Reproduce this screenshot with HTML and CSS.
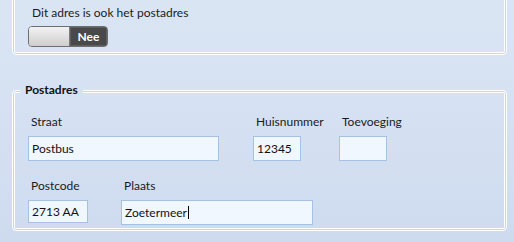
FILE: index.html
```
<!DOCTYPE html>
<html lang="nl">
<head>
<meta charset="utf-8">
<title>Adres</title>
<link rel="stylesheet" href="styles.css">
</head>
<body>
<div class="group group-top">
  <div class="check-label">Dit adres is ook het postadres</div>
  <div class="toggle">
    <span class="toggle-thumb"></span>
    <span class="toggle-text">Nee</span>
  </div>
</div>
<fieldset class="group group-post">
  <legend class="legend">Postadres</legend>
  <div class="fields">
    <div class="row row-one">
      <div class="field f-straat">
        <div class="label">Straat</div>
        <div class="input">Postbus</div>
      </div>
      <div class="field f-huis">
        <div class="label">Huisnummer</div>
        <div class="input">12345</div>
      </div>
      <div class="field f-toev">
        <div class="label">Toevoeging</div>
        <div class="input"></div>
      </div>
    </div>
    <div class="row row-two">
      <div class="field f-postcode">
        <div class="label">Postcode</div>
        <div class="input input-short">2713 AA</div>
      </div>
      <div class="field f-plaats">
        <div class="label">Plaats</div>
        <div class="input">Zoetermeer<span class="caret"></span></div>
      </div>
    </div>
  </div>
</fieldset>
</body>
</html>
```
FILE: styles.css
```
html, body {
  margin: 0;
  padding: 0;
}
body {
  width: 514px;
  height: 242px;
  overflow: hidden;
  background: linear-gradient(to bottom, #dae5f4 0%, #d5e1f2 50%, #cedbef 100%);
  font-family: Lato, "Liberation Sans", sans-serif;
  font-size: 12px;
  color: #1b1b1b;
}
.group {
  border: 1px solid #ffffff;
  border-radius: 4px;
  box-shadow: inset 0 0 0 1px #c9d6e6, inset 0 0 0 2px #ffffff;
  margin-left: 12px;
  margin-right: 7px;
  box-sizing: border-box;
}
.group-top {
  margin-top: -20px;
  padding: 24px 0 7px 15px;
}
.check-label {
  line-height: 16px;
  padding-left: 4px;
}
.toggle {
  margin-top: 5px;
  width: 80px;
  height: 21px;
  box-sizing: border-box;
  border: 1px solid #6e6e6e;
  border-radius: 4px;
  overflow: hidden;
  display: flex;
}
.toggle-thumb {
  width: 40px;
  background: linear-gradient(to bottom, #f2f2f2 0%, #e2e2e2 45%, #cdcdcd 100%);
  border-right: 1px solid #7a7a7a;
}
.toggle-text {
  flex: 1;
  background: #494949;
  color: #ffffff;
  font-weight: bold;
  text-align: center;
  line-height: 19px;
  box-shadow: inset 0 0 0 1px #5e5e5e;
}
.group-post {
  margin-top: 27px;
  padding: 0 0 5px 0;
  min-width: 0;
}
.legend {
  margin-left: 7px;
  padding: 0 5px;
  font-weight: bold;
  line-height: 16px;
  color: #111;
  background: #d6e2f3;
}
.fields {
  padding-left: 15px;
}
.row {
  display: flex;
}
.row-one {
  margin-top: 16px;
}
.row-two {
  margin-top: 17px;
}
.label {
  line-height: 16px;
  padding-left: 3px;
  white-space: nowrap;
}
.input {
  margin-top: 6px;
  height: 25px;
  box-sizing: border-box;
  border: 1px solid #a6c2e2;
  background: #f1f7fe;
  padding-left: 3px;
  line-height: 23px;
  color: #111;
  white-space: nowrap;
}
.input-short {
  height: 23px;
  line-height: 21px;
}
.f-straat { width: 191px; margin-right: 34px; }
.f-huis { width: 48px; margin-right: 38px; }
.f-toev { width: 48px; }
.f-postcode { width: 60px; margin-right: 33px; }
.f-plaats { width: 192px; }
.caret {
  display: inline-block;
  width: 1px;
  height: 13px;
  background: #000;
  vertical-align: -2px;
  margin-left: 1px;
}
```
